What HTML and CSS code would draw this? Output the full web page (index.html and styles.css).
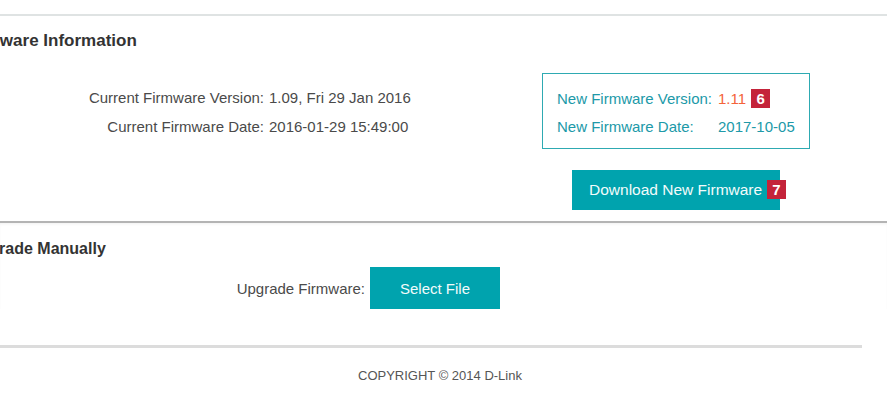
FILE: index.html
```html
<!DOCTYPE html>
<html>
<head>
    <meta charset="UTF-8">
    <link rel="stylesheet" href="styles.css">
</head>
<body>
    <!-- top menu strip (cut off) -->
    <div class="topbar"></div>

    <!-- firmware information -->
    <div class="section">
        <h2 class="title title-info">Firmware Information</h2>
        <div class="info-row">
            <div class="current">
                <div class="label">Current Firmware Version:</div>
                <div class="value">1.09, Fri 29 Jan 2016</div>
                <div class="label">Current Firmware Date:</div>
                <div class="value">2016-01-29 15:49:00</div>
            </div>
            <div class="latest">
                <div class="new-box">
                    <div class="new-line">
                        <span class="new-label">New Firmware Version:</span>
                        <span class="new-version">1.11</span>
                        <span class="badge">6</span>
                    </div>
                    <div class="new-line">
                        <span class="new-label">New Firmware Date:</span>
                        <span class="new-date">2017-10-05</span>
                    </div>
                </div>
                <button class="btn btn-download">Download New Firmware<span class="badge badge-over">7</span></button>
            </div>
        </div>
    </div>

    <!-- upgrade manually -->
    <div class="section section-upgrade">
        <h2 class="title title-upgrade">Upgrade Manually</h2>
        <div class="upgrade-row">
            <div class="upgrade-label">Upgrade Firmware:</div>
            <button class="btn btn-select">Select File</button>
        </div>
    </div>

    <div class="footer">COPYRIGHT © 2014 D-Link</div>
</body>
</html>
```

FILE: styles.css
```css
body {
    margin: 0;
    font-family: 'Liberation Sans', Arial, sans-serif;
    background: #ffffff;
    color: #444444;
    width: 887px;
    height: 397px;
    overflow: hidden;
}
.topbar {
    height: 14px;
    border-bottom: 2px solid #dfe3e3;
}
.section {
    padding-top: 15px;
}
.title {
    margin: 0;
    font-size: 17px;
    line-height: 20px;
    font-weight: bold;
    color: #333333;
    white-space: nowrap;
}
.title-info {
    margin-left: -37px;
}
.info-row {
    display: flex;
    margin-top: 22px;
}
.current {
    width: 542px;
    display: grid;
    grid-template-columns: 264px auto;
    column-gap: 5px;
    row-gap: 12px;
    align-content: start;
    padding-top: 16px;
    font-size: 15px;
    line-height: 17px;
    color: #4a4a4a;
}
.label {
    text-align: right;
}
.latest {
    width: 268px;
    display: flex;
    flex-direction: column;
    align-items: center;
}
.new-box {
    box-sizing: border-box;
    width: 268px;
    height: 76px;
    border: 1px solid #2eaab2;
    padding: 15px 0 0 14px;
    display: flex;
    flex-direction: column;
    gap: 10px;
    font-size: 15px;
    line-height: 17px;
    color: #2099a8;
}
.new-line {
    display: flex;
    align-items: center;
}
.new-label {
    width: 161px;
}
.new-version {
    color: #f4633a;
}
.badge {
    display: inline-block;
    width: 19px;
    height: 19px;
    background: #c4233a;
    color: #ffffff;
    font-weight: bold;
    font-size: 15px;
    line-height: 19px;
    text-align: center;
    margin-left: 5px;
}
.btn {
    border: none;
    background: #00a3ae;
    color: #f2fbfb;
    font-family: 'Liberation Sans', Arial, sans-serif;
    font-size: 15px;
    padding: 0;
    cursor: pointer;
}
.btn-download {
    position: relative;
    margin-top: 21px;
    width: 208px;
    height: 40px;
    text-align: left;
    padding-left: 17px;
    font-size: 15.5px;
}
.badge-over {
    position: absolute;
    left: 195px;
    top: 10px;
    margin-left: 0;
}
.section-upgrade {
    margin-top: 11px;
    border-top: 2px solid #b4b4b4;
    box-shadow: inset 0 2px 3px -1px rgba(0,0,0,0.06);
    padding-top: 16px;
}
.title-upgrade {
    font-size: 16px;
    margin-left: -32px;
}
.upgrade-row {
    display: flex;
    align-items: center;
    margin-top: 8px;
}
.upgrade-label {
    width: 365px;
    text-align: right;
    font-size: 15px;
    color: #4a4a4a;
}
.btn-select {
    margin-left: 5px;
    width: 130px;
    height: 42px;
}
.footer {
    margin-top: 36px;
    border-top: 3px solid #dcdcdc;
    margin-right: 25px;
    padding-top: 20px;
    padding-left: 18px;
    text-align: center;
    font-size: 13px;
    color: #555555;
}
```
